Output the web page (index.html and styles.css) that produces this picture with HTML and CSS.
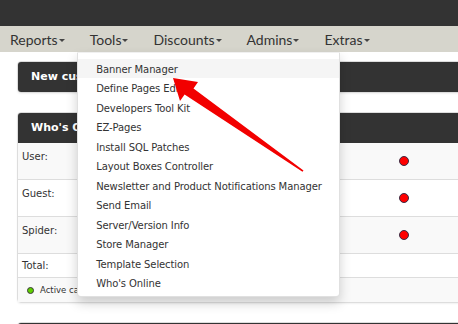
FILE: index.html
```html
<!DOCTYPE html>
<html lang="en">
<head>
  <meta charset="UTF-8" />
  <meta name="viewport" content="width=device-width, initial-scale=1.0"/>
  <title>Admin – Tools</title>
  <link rel="stylesheet" href="styles.css">
</head>
<body>
  <div class="topbar"></div>

  <nav class="menu">
    <div class="menu-item">Reports<span class="caret"></span></div>
    <div class="menu-item open">Tools<span class="caret"></span>
      <ul class="dropdown">
        <li class="active">Banner Manager</li>
        <li>Define Pages Editor</li>
        <li>Developers Tool Kit</li>
        <li>EZ-Pages</li>
        <li>Install SQL Patches</li>
        <li>Layout Boxes Controller</li>
        <li>Newsletter and Product Notifications Manager</li>
        <li>Send Email</li>
        <li>Server/Version Info</li>
        <li>Store Manager</li>
        <li>Template Selection</li>
        <li>Who's Online</li>
      </ul>
    </div>
    <div class="menu-item">Discounts<span class="caret"></span></div>
    <div class="menu-item">Admins<span class="caret"></span></div>
    <div class="menu-item">Extras<span class="caret"></span></div>
  </nav>

  <div class="main">
    <div class="card">
      <div class="card-head solo">New customers</div>
    </div>

    <div class="card">
      <div class="card-head">Who's Online</div>
      <div class="row tall odd"><span class="label">User:</span><span class="dot"></span></div>
      <div class="row tall"><span class="label">Guest:</span><span class="dot"></span></div>
      <div class="row tall odd"><span class="label">Spider:</span><span class="dot"></span></div>
      <div class="row short"><span class="label mid">Total:</span></div>
      <div class="row legend odd">
        <span class="label mid"><span class="dot green"></span>Active cart</span>
      </div>
    </div>

    <div class="card">
      <div class="card-head">Orders</div>
    </div>
  </div>

  <!-- red pointer drawn over the menu -->
  <svg class="pointer" width="458" height="324" viewBox="0 0 458 324">
    <polygon points="173,78 198,82 193.5,88.5 303.5,170.5 302.5,171.8 184.6,94.5 180,101" fill="#f20000"/>
  </svg>
</body>
</html>
```

FILE: styles.css
```css
body {
  margin: 0;
  padding: 0;
  font-family: "DejaVu Sans", Verdana, sans-serif;
  background: #fff;
  color: #333;
  overflow: hidden;
  position: relative;
  height: 324px;
}

.topbar {
  height: 26px;
  background: #333;
}

.menu {
  display: flex;
  height: 26px;
  background: #d6d5cc;
  font-family: Lato, "Open Sans", sans-serif;
  font-size: 14px;
  color: #333;
  position: relative;
  z-index: 5;
}

.menu-item {
  display: flex;
  align-items: center;
  padding: 0 12.5px;
  position: relative;
}

.menu-item:first-child {
  padding-left: 10px;
}

.caret {
  display: inline-block;
  margin-left: 1px;
  margin-top: 3px;
  border-left: 3px solid transparent;
  border-right: 3px solid transparent;
  border-top: 3.5px solid #444;
}

.dropdown {
  position: absolute;
  top: 100%;
  left: 0;
  width: 261px;
  margin: 0;
  padding: 6px 0 4px;
  list-style: none;
  background: #fff;
  border: 1px solid rgba(0, 0, 0, 0.12);
  border-top-color: #f0f0f0;
  border-radius: 0 0 4px 4px;
  box-shadow: 0 6px 12px rgba(0, 0, 0, 0.18);
  font-family: "DejaVu Sans", Verdana, sans-serif;
  font-size: 10px;
  letter-spacing: -0.1px;
}

.dropdown li {
  padding: 4px 18px 2px;
  line-height: 13.45px;
  color: #333;
  white-space: nowrap;
}

.dropdown li.active {
  background: #f5f5f5;
}

.main {
  padding: 9px 0 0 17px;
  width: 700px;
}

.card {
  border: 1px solid #ddd;
  border-radius: 4px;
  margin-bottom: 19px;
  box-shadow: 0 1px 2px rgba(0, 0, 0, 0.06);
}

.card-head {
  height: 30px;
  line-height: 30px;
  padding-left: 13px;
  background: #333;
  color: #fff;
  font-weight: bold;
  font-size: 11px;
  border-radius: 3px 3px 0 0;
}

.card-head.solo {
  border-radius: 3px;
}

.row {
  display: grid;
  grid-template-columns: 376px 20px;
  border-bottom: 1px solid #ddd;
  font-size: 10px;
}

.row:last-child {
  border-bottom: none;
}

.row.odd {
  background: #f9f9f9;
}

.row.tall {
  height: 36px;
}

.row.short {
  height: 23px;
}

.row.legend {
  height: 24px;
}

.label {
  padding: 7px 4px 5px;
  line-height: 14px;
}

.label.mid {
  display: flex;
  align-items: center;
  padding-top: 0;
  padding-bottom: 0;
}

.legend .label {
  font-size: 8.5px;
  padding-left: 9px;
}

.dot {
  width: 8px;
  height: 8px;
  border-radius: 50%;
  background: #f00;
  border: 1.5px solid #3b2d45;
  align-self: center;
  justify-self: center;
}

.dot.green {
  width: 5px;
  height: 5px;
  background: #5fd000;
  border-color: #3a3a3a;
  margin-right: 6px;
}

.pointer {
  position: absolute;
  top: 0;
  left: 0;
  z-index: 10;
  pointer-events: none;
}
```
